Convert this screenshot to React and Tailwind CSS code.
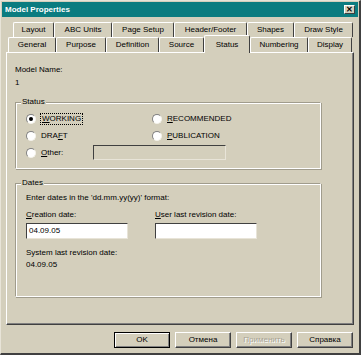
import React from 'react';

const row1 = [
  { label: 'Layout', w: 41 },
  { label: 'ABC Units', w: 58 },
  { label: 'Page Setup', w: 62 },
  { label: 'Header/Footer', w: 73 },
  { label: 'Shapes', w: 47 },
  { label: 'Draw Style', w: 59 },
];

const row2 = [
  { label: 'General', w: 48 },
  { label: 'Purpose', w: 50 },
  { label: 'Definition', w: 53 },
  { label: 'Source', w: 45 },
  { label: 'Status', w: 46, active: true },
  { label: 'Numbering', w: 58 },
  { label: 'Display', w: 44 },
];

const Tab = ({ label, w, active }) => (
  <div
    style={{ width: w }}
    className={
      'flex items-center justify-center border-t border-l border-r border-t-white border-l-white border-r-[#404040] rounded-t-[2px] ' +
      (active ? 'h-[18px] -mt-[2px] -mb-[1px] bg-[#d4cfbc] z-10 relative' : 'h-[15px]')
    }
  >
    <span className="leading-[10px]">{label}</span>
  </div>
);

const Radio = ({ checked }) => (
  <span className="w-[10px] h-[10px] rounded-full bg-white border border-t-[#808080] border-l-[#808080] border-r-[#f4f2ea] border-b-[#f4f2ea] flex items-center justify-center shrink-0">
    {checked && <span className="w-[4px] h-[4px] rounded-full bg-black" />}
  </span>
);

const Input = ({ value, className }) => (
  <div className={'h-[16px] bg-white border border-t-[#404040] border-l-[#404040] border-r-[#e8e4d8] border-b-[#e8e4d8] flex items-center px-[2px] shrink-0 ' + className}>
    <span className="leading-[10px]">{value}</span>
  </div>
);

const Group = ({ title, className, children }) => (
  <div className={'relative border border-t-[#a09c8c] border-l-[#a09c8c] border-r-white border-b-white shadow-[inset_1px_1px_0_white,1px_1px_0_#a09c8c] ' + className}>
    <span className="absolute -top-[6px] left-[5px] px-[1px] bg-[#d4cfbc] leading-[10px]">{title}</span>
    {children}
  </div>
);

const Button = ({ label, isDefault, disabled }) => (
  <div
    className={
      'w-[56px] h-[16px] flex items-center justify-center border ' +
      (isDefault
        ? 'border-black shadow-[inset_1px_1px_0_white,inset_-1px_-1px_0_#808080]'
        : 'border-t-white border-l-white border-r-[#404040] border-b-[#404040] shadow-[inset_-1px_-1px_0_#808080]')
    }
  >
    <span className={'leading-[10px] ' + (disabled ? 'text-[#a8a496] [text-shadow:1px_1px_0_white]' : '')}>{label}</span>
  </div>
);

export default function App() {
  return (
    <div className="w-[361px] h-[355px] bg-[#d4cfbc] text-black text-[8px] font-['Liberation_Sans',Arial,sans-serif] border-r-2 border-b-2 border-r-[#404040] border-b-[#404040] border-l border-t border-l-[#e8e4d8] border-t-[#e8e4d8] flex flex-col overflow-hidden">
      {/* title bar */}
      <div className="h-[15px] mx-[1px] mt-[1px] bg-[#0b7c80] flex items-center justify-between pl-[3px] pr-[3px]">
        <span className="text-white font-bold text-[8px] leading-[10px]">Model Properties</span>
        <div className="w-[11px] h-[9px] bg-[#d4cfbc] border border-t-white border-l-white border-r-[#404040] border-b-[#404040] flex items-center justify-center">
          <span className="font-bold text-[8px] leading-[8px]">✕</span>
        </div>
      </div>

      {/* tabs */}
      <div className="mt-[5px] flex flex-col">
        <div className="flex pl-[12px]">
          {row1.map(t => <Tab key={t.label} {...t} />)}
        </div>
        <div className="flex pl-[7px]">
          {row2.map(t => <Tab key={t.label} {...t} />)}
        </div>
      </div>

      {/* page */}
      <div className="ml-[5px] w-[348px] h-[273px] border border-t-white border-l-white border-r-[#404040] border-b-[#404040] shadow-[inset_-1px_-1px_0_#808080] flex flex-col pl-[8px] pr-[32px]">
        <span className="mt-[12px] leading-[10px]">Model Name:</span>
        <span className="mt-[3px] leading-[10px]">1</span>

        <Group title="Status" className="mt-[14px] h-[67px] pt-[7px] pl-[10px] flex flex-col">
          <div className="h-[17px] flex items-center">
            <div className="w-[126px] flex items-center gap-[4px]">
              <Radio checked />
              <span className="leading-[10px] border border-dotted border-black px-[1px]"><u>W</u>ORKING</span>
            </div>
            <div className="flex items-center gap-[5px]">
              <Radio />
              <span className="leading-[10px]"><u>R</u>ECOMMENDED</span>
            </div>
          </div>
          <div className="h-[17px] flex items-center">
            <div className="w-[126px] flex items-center gap-[5px]">
              <Radio />
              <span className="leading-[10px]">DRA<u>F</u>T</span>
            </div>
            <div className="flex items-center gap-[5px]">
              <Radio />
              <span className="leading-[10px]"><u>P</u>UBLICATION</span>
            </div>
          </div>
          <div className="h-[17px] flex items-center gap-[5px]">
            <Radio />
            <span className="leading-[10px] w-[47px] shrink-0"><u>O</u>ther:</span>
            <Input value="" className="w-[133px] !h-[15px] !bg-[#d4cfbc]" />
          </div>
        </Group>

        <Group title="Dates" className="mt-[14px] h-[114px] pt-[9px] pl-[10px] flex flex-col">
          <span className="leading-[10px]">Enter dates in the 'dd.mm.yy(yy)' format:</span>
          <div className="flex mt-[7px] gap-[27px]">
            <div className="flex flex-col w-[102px]">
              <span className="leading-[10px]"><u>C</u>reation date:</span>
              <Input value="04.09.05" className="mt-[3px] w-[102px]" />
            </div>
            <div className="flex flex-col w-[102px]">
              <span className="leading-[10px]"><u>U</u>ser last revision date:</span>
              <Input value="" className="mt-[3px] w-[102px]" />
            </div>
          </div>
          <span className="mt-[9px] leading-[10px]">System last revision date:</span>
          <span className="mt-[2px] leading-[10px]">04.09.05</span>
        </Group>
      </div>

      {/* buttons */}
      <div className="mt-[7px] flex justify-end gap-[5px] pr-[6px]">
        <Button label="OK" isDefault />
        <Button label="Отмена" />
        <Button label="Применить" disabled />
        <Button label="Справка" />
      </div>
    </div>
  );
}
